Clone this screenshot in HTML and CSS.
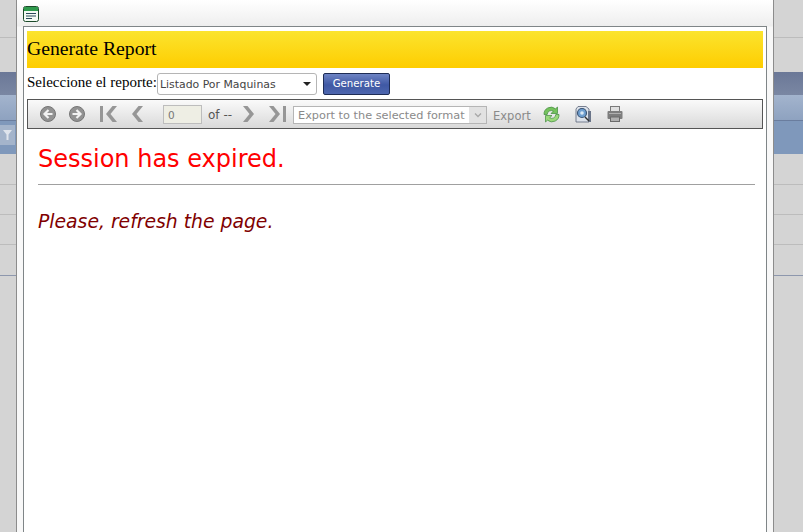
FILE: index.html
```html
<!DOCTYPE html>
<html>
<head>
<link rel="stylesheet" href="styles.css">
</head>
<body>

<!-- page behind the dialog -->
<div class="backdrop">
  <div class="bg-row bg-h38"></div>
  <div class="bg-row bg-h34"></div>
  <div class="bg-head-dark"></div>
  <div class="bg-head-light"></div>
  <div class="bg-head-blue">
    <span class="filter-btn">
      <svg width="9" height="10" viewBox="0 0 9 10"><path d="M0 0h9L5.500 4.500V10h-2V4.500z" fill="#dfe4ec"/></svg>
    </span>
  </div>
  <div class="bg-row bg-h31"></div>
  <div class="bg-row bg-h30"></div>
  <div class="bg-row bg-h30"></div>
  <div class="bg-row bg-h31 bg-dark-line"></div>
</div>

<div class="window">
  <div class="window-bar">
    <svg class="win-icon" width="16" height="16" viewBox="0 0 16 16">
      <rect x="0.5" y="0.5" width="15" height="15" rx="2" fill="#f4fbf4" stroke="#1c4a2a"/>
      <rect x="1" y="1" width="14" height="4" fill="#2f9a4c"/>
      <path d="M3 7.500h10M3 10h10M3 12.500h6" stroke="#2a4a5a" stroke-width="1"/>
    </svg>
  </div>

  <div class="panel">
    <div class="report-title">Generate Report</div>

    <div class="picker">
      <span class="picker-label">Seleccione el reporte:</span>
      <div class="select-box">
        <span>Listado Por Maquinas</span>
        <span class="select-arrow"></span>
      </div>
      <button class="generate-btn">Generate</button>
    </div>

    <div class="toolbar">
      <svg class="tool tool-back" width="16" height="16" viewBox="0 0 16 16">
        <circle cx="8" cy="8" r="7.500" fill="#929292" stroke="#767676"/>
        <path d="M12.500 8H5.500M8.500 4 4.500 8 8.500 12" fill="none" stroke="#f2f2f2" stroke-width="2.200"/>
      </svg>
      <svg class="tool tool-next" width="16" height="16" viewBox="0 0 16 16">
        <circle cx="8" cy="8" r="7.500" fill="#929292" stroke="#767676"/>
        <path d="M3.500 8h7M7.500 4 11.500 8 7.500 12" fill="none" stroke="#f2f2f2" stroke-width="2.200"/>
      </svg>
      <svg class="tool tool-first" width="17" height="16" viewBox="0 0 17 16">
        <path d="M0 0h3v16H0zM12.500 0h4.500l-6.500 8 6.500 8h-4.500L6 8z" fill="#969696"/>
      </svg>
      <svg class="tool tool-prev" width="11" height="16" viewBox="0 0 11 16">
        <path d="M6.500 0h4.500L4.500 8 11 16H6.500L0 8z" fill="#969696"/>
      </svg>
      <input class="page-input" type="text" value="0" disabled>
      <span class="page-of">of --</span>
      <svg class="tool tool-fwd" width="11" height="16" viewBox="0 0 11 16">
        <path d="M4.500 0H0l6.500 8L0 16h4.500l6.500-8z" fill="#969696"/>
      </svg>
      <svg class="tool tool-last" width="17" height="16" viewBox="0 0 17 16">
        <path d="M17 0h-3v16h3zM4.500 0H0l6.500 8L0 16h4.500L11 8z" fill="#969696"/>
      </svg>
      <div class="format-box">
        <span class="format-text">Export to the selected format</span>
        <span class="format-arrow">
          <svg width="8" height="6" viewBox="0 0 8 6"><path d="M1 1.500 4 4.500 7 1.500" fill="none" stroke="#a8a8a8" stroke-width="1.300"/></svg>
        </span>
      </div>
      <span class="export-link">Export</span>
      <svg class="tool tool-refresh" width="17" height="17" viewBox="0 0 17 17">
        <path d="M1 8.500A7 7 0 0 1 12.500 2.800L14.500 1v6.500H8l2.300-2.300A4 4 0 0 0 4.200 8.500z" fill="#74c25c" stroke="#3f8a3c" stroke-width=".7"/>
        <path d="M16 8.500A7 7 0 0 1 4.500 14.200L2.500 16V9.500H9l-2.300 2.300A4 4 0 0 0 12.800 8.500z" fill="#9ad97a" stroke="#3f8a3c" stroke-width=".7"/>
      </svg>
      <svg class="tool tool-zoom" width="17" height="17" viewBox="0 0 17 17">
        <path d="M1 16V3l2-2.500h8l3 2.500v13z" fill="#dde2ea" stroke="#5a6478" stroke-width=".8"/>
        <path d="M13 5h3v11h-3z" fill="#6a7488"/>
        <circle cx="7" cy="7" r="4.500" fill="#6f9fd0" stroke="#3c5676" stroke-width="1.200"/>
        <circle cx="7" cy="7" r="1.800" fill="#dce9f5"/>
        <path d="M10 11l4 4" stroke="#333" stroke-width="1.400"/>
      </svg>
      <svg class="tool tool-print" width="16" height="16" viewBox="0 0 16 16">
        <rect x="3.500" y=".5" width="9" height="5" fill="#e0e0e0" stroke="#7a7a7a"/>
        <rect x=".5" y="5" width="15" height="8" rx="1" fill="#7d7d7d"/>
        <path d="M2 7.500h12" stroke="#b0b0b0"/>
        <rect x="3.500" y="11" width="9" height="4.500" fill="#b0b0b0" stroke="#6a6a6a"/>
      </svg>
    </div>

    <div class="message">
      <div class="msg-title">Session has expired.</div>
      <hr class="msg-rule">
      <div class="msg-hint">Please, refresh the page.</div>
    </div>
  </div>
</div>

</body>
</html>
```

FILE: styles.css
```css
html, body {
  margin: 0;
  padding: 0;
  height: 100%;
  overflow: hidden;
}

body {
  background-color: #d4d4d4;
  font-family: "Liberation Serif", serif;
}

/* background page */
.backdrop {
  display: flex;
  flex-direction: column;
}

.bg-row {
  border-bottom: 1px solid #bcbcbc;
  box-sizing: border-box;
}

.bg-h38 { height: 38px; }
.bg-h34 { height: 34px; border-bottom: none; }
.bg-h31 { height: 31px; }
.bg-h30 { height: 30px; }
.bg-dark-line { border-bottom-color: #8d97ad; }

.bg-head-dark {
  height: 23px;
  background: linear-gradient(#6b7897, #7a87a3);
}

.bg-head-light {
  height: 26px;
  background: linear-gradient(#a3b4cd, #8ea2c0);
  border-bottom: 1px solid #6a7d9e;
  box-sizing: border-box;
}

.bg-head-blue {
  height: 33px;
  padding-top: 4px;
  box-sizing: border-box;
  background-color: #7f98bb;
}

.filter-btn {
  display: flex;
  justify-content: center;
  align-items: center;
  width: 15px;
  height: 20px;
  background: #a4b4cb;
}

/* dialog */
.window {
  position: absolute;
  left: 16px;
  top: 0;
  width: 758px;
  height: 532px;
  box-sizing: border-box;
  border-left: 1px solid #8c8c8c;
  border-right: 1px solid #8c8c8c;
  padding: 0 6px;
  background: linear-gradient(#ffffff, #eeeeee 26px, #f8f8f8 27px);
  display: flex;
  flex-direction: column;
}

.window-bar {
  height: 26px;
  flex-shrink: 0;
  box-sizing: border-box;
  padding-top: 6px;
}

.win-icon {
  display: block;
}

.panel {
  flex: 1;
  background-color: #fff;
  border: 1px solid #7f8587;
  border-bottom: none;
  padding: 4px 3px 0 3px;
}

.report-title {
  height: 37px;
  line-height: 34px;
  font-size: 19.7px;
  color: #000;
  background: linear-gradient(#fbe42e, #fecd00);
}

.picker {
  display: flex;
  align-items: center;
  height: 31px;
}

.picker-label {
  font-size: 15px;
  color: #000;
  white-space: nowrap;
  position: relative;
  top: -1px;
}

.select-box {
  width: 160px;
  height: 22px;
  box-sizing: border-box;
  border: 1px solid #b5b5b5;
  border-radius: 3px;
  display: flex;
  align-items: center;
  justify-content: space-between;
  padding: 1px 5px 0 2px;
  font-family: "DejaVu Sans", sans-serif;
  font-size: 10.900px;
  color: #444;
  background: #fff;
}

.select-arrow {
  width: 0;
  height: 0;
  border-left: 4px solid transparent;
  border-right: 4px solid transparent;
  border-top: 4px solid #222;
}

.generate-btn {
  margin-left: 6px;
  width: 67px;
  height: 22px;
  padding: 0;
  box-sizing: border-box;
  border: 1px solid #1e2c55;
  border-radius: 2px;
  color: #fff;
  font-family: "DejaVu Sans", sans-serif;
  font-size: 10.200px;
  background: linear-gradient(#6e84c4, #3f58a4 55%, #4d66ae);
}

.toolbar {
  height: 30px;
  box-sizing: border-box;
  border: 1px solid #555;
  display: flex;
  align-items: center;
  background: linear-gradient(#fafafa, #d9d9d9);
  font-family: "DejaVu Sans", sans-serif;
  font-size: 11.500px;
  color: #777;
}

.tool {
  flex-shrink: 0;
}

.tool-back { margin-left: 12px; }
.tool-next { margin-left: 13px; }
.tool-first { margin-left: 15px; }
.tool-prev { margin-left: 15px; }
.tool-fwd { margin-left: 11px; }
.tool-last { margin-left: 15px; }
.tool-refresh { margin-left: 12px; }
.tool-zoom { margin-left: 15px; }
.tool-print { margin-left: 15px; }

.page-input {
  width: 39px;
  height: 19px;
  box-sizing: border-box;
  margin: 1px 0 0 20px;
  padding: 0 0 0 4px;
  border: 1px solid #bdbdbd;
  background: #eeeee4;
  font-family: "DejaVu Sans", sans-serif;
  font-size: 10.500px;
  color: #777;
}

.page-of {
  margin-left: 6px;
  padding-top: 2px;
  color: #555;
  font-size: 12px;
}

.format-box {
  margin: 2px 0 0 7px;
  width: 194px;
  height: 18px;
  box-sizing: border-box;
  border: 1px solid #b5b5b5;
  display: flex;
  background: #fff;
}

.format-text {
  flex: 1;
  padding-left: 4px;
  line-height: 18px;
  white-space: nowrap;
  font-size: 11.300px;
  color: #8a8a8a;
}

.format-arrow {
  width: 17px;
  flex-shrink: 0;
  display: flex;
  align-items: center;
  justify-content: center;
  background: #e2e2e2;
}

.export-link {
  margin-left: 6px;
  padding-top: 3px;
  color: #8a8a8a;
}

/* message */
.message {
  padding: 11px 8px 0 11px;
}

.msg-title {
  font-family: "DejaVu Sans", sans-serif;
  font-size: 24px;
  line-height: 38px;
  color: #ff0000;
}

.msg-rule {
  margin: 6px 0 0 0;
  border: none;
  border-top: 1px solid #a0a0a0;
}

.msg-hint {
  margin-top: 26px;
  font-family: "DejaVu Sans", sans-serif;
  font-size: 18.800px;
  font-style: italic;
  color: #800000;
}
```
